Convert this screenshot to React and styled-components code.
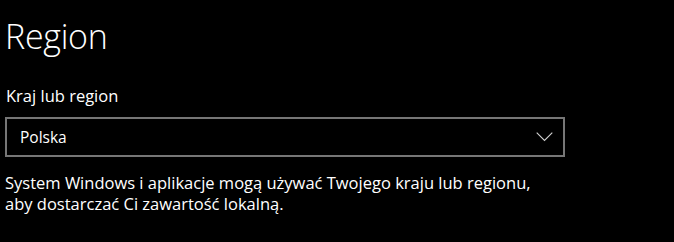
import React from "react";
import styled, { createGlobalStyle } from "styled-components";

const Global = createGlobalStyle`
  html, body { margin: 0; padding: 0; background: #000; }
  body { font-family: "Open Sans", "Noto Sans", sans-serif; color: #fff; }
`;

const Page = styled.div`
  width: 674px;
  height: 242px;
  background: #000;
  padding: 14px 0 0 5px;
  box-sizing: border-box;
  overflow: hidden;
`;

const Title = styled.h1`
  margin: 0;
  font-weight: 300;
  font-size: 34px;
  line-height: 44px;
  letter-spacing: -0.3px;
`;

const Label = styled.div`
  margin-top: 28px;
  font-size: 16.5px;
  line-height: 20px;
  padding-left: 1px;
`;

const Select = styled.div`
  margin-top: 11px;
  width: 560px;
  height: 40px;
  box-sizing: border-box;
  border: 2px solid #767676;
  display: flex;
  align-items: center;
  justify-content: space-between;
  padding: 0 10px 0 13px;
  font-size: 15.5px;
`;

const Chevron = styled.svg`
  width: 17px;
  height: 10px;
  display: block;
`;

const Description = styled.p`
  margin: 15px 0 0;
  font-size: 16.5px;
  line-height: 21px;
  width: 660px;
`;

export default function App() {
  return (
    <>
      <Global />
      <Page>
        <Title>Region</Title>
        <Label>Kraj lub region</Label>
        <Select>
          <span>Polska</span>
          <Chevron viewBox="0 0 17 10">
            <path d="M0.7 0.7 L8.5 8.5 L16.3 0.7" fill="none" stroke="#d0d0d0" strokeWidth="1.1" />
          </Chevron>
        </Select>
        <Description>
          System Windows i aplikacje mogą używać Twojego kraju lub regionu,
          <br />
          aby dostarczać Ci zawartość lokalną.
        </Description>
      </Page>
    </>
  );
}
